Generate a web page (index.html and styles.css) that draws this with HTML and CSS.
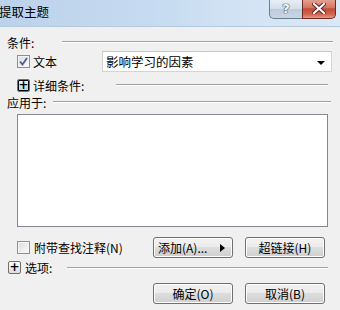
FILE: index.html
```html
<!DOCTYPE html>
<html lang="zh">
<head>
<meta charset="utf-8">
<link rel="stylesheet" href="styles.css">
</head>
<body>
<div class="dialog">
  <div class="titlebar">
    <span class="title">提取主题</span>
    <div class="caption-btns">
      <div class="cbtn help">?</div>
      <div class="cbtn close">
        <svg width="14" height="11" viewBox="0 0 14 11"><path d="M2 1 L12 10 M12 1 L2 10" stroke="#5a1e1e" stroke-width="4" stroke-linecap="square"/><path d="M2 1 L12 10 M12 1 L2 10" stroke="#fff" stroke-width="2.2" stroke-linecap="square"/></svg>
      </div>
    </div>
  </div>
  <div class="content">
    <div class="heading h1"><span>条件:</span><i class="rule r1"></i></div>
    <div class="row r-text">
      <span class="chk checked"><svg width="9" height="9" viewBox="0 0 9 9"><path d="M1 4.5 L3.5 7.5 L8 1" fill="none" stroke="#4a5f97" stroke-width="1.8"/></svg></span>
      <span class="lbl">文本</span>
      <div class="combo"><span>影响学习的因素</span><i class="arrow"></i></div>
    </div>
    <div class="heading h2"><span class="exp hot">+</span><span class="lbl">详细条件:</span><i class="rule r2"></i></div>
    <div class="heading h3"><span>应用于:</span><i class="rule r3"></i></div>
    <div class="listbox"></div>
    <div class="row r-actions">
      <span class="chk"></span>
      <span class="lbl">附带查找注释(N)</span>
      <div class="btns">
        <button class="btn add">添加(A)... <i class="tri"></i></button>
        <button class="btn">超链接(H)</button>
      </div>
    </div>
    <div class="heading h4"><span class="exp">+</span><span class="lbl opt">选项:</span><i class="rule r4"></i></div>
    <div class="row r-ok">
      <div class="btns">
        <button class="btn">确定(O)</button>
        <button class="btn">取消(B)</button>
      </div>
    </div>
  </div>
</div>
</body>
</html>
```

FILE: styles.css
```css
html, body {
  margin: 0;
  padding: 0;
}
body {
  width: 340px;
  height: 310px;
  overflow: hidden;
  background: #f0f0f0;
  font-family: "Noto Sans CJK SC", "Liberation Sans", sans-serif;
  font-size: 12px;
  color: #000;
}
.dialog {
  width: 340px;
  height: 310px;
}
.titlebar {
  height: 26px;
  border-bottom: 1px solid #b4c8dc;
  background: linear-gradient(to right, #bcd2ea 0%, #c6dbf1 45%, #d4e4f4 75%, #dbe8f5 100%);
  display: flex;
  align-items: flex-start;
  justify-content: space-between;
}
.title {
  line-height: 24px;
  font-size: 12.5px;
  margin-left: -1px;
  color: #000;
}
.caption-btns {
  display: flex;
  margin-right: 4px;
  margin-top: -1px;
}
.cbtn {
  height: 19px;
  border: 1px solid #6b7d93;
  border-top: none;
  display: flex;
  align-items: center;
  justify-content: center;
}
.help {
  width: 32px;
  border-radius: 0 0 0 5px;
  border-right: none;
  background: linear-gradient(#e9eff6 0%, #d4dfeb 50%, #bccbdb 52%, #c9d6e4 100%);
  color: #fff;
  font-family: "DejaVu Sans", sans-serif;
  font-weight: bold;
  font-size: 13px;
  text-shadow: 0 0 1px #2b3b52, 0 0 1px #2b3b52, 0 0 1px #2b3b52;
}
.close {
  width: 32px;
  border-radius: 0 0 5px 0;
  border-color: #6e2a25;
  background: linear-gradient(#e8a595 0%, #d47667 45%, #c24a38 52%, #d26350 80%, #e39a84 100%);
}
.content {
  padding: 7px 0 0 7px;
}
.heading {
  display: flex;
  align-items: center;
  height: 16px;
}
.rule {
  display: block;
  flex: 1;
  height: 0;
  border-top: 1px solid #a0a0a0;
  border-bottom: 1px solid #fff;
}
.r1 { margin-left: 28px; margin-right: 7px; }
.r2 { margin-left: 32px; margin-right: 12px; }
.r3 { margin-left: 7px; margin-right: 9px; }
.r4 { margin-left: 15px; margin-right: 12px; }
.row {
  display: flex;
  align-items: center;
}
.r-text {
  height: 21px;
  margin-top: 1px;
  padding-left: 10px;
}
.chk {
  width: 11px;
  height: 11px;
  border: 1px solid #8e8f8f;
  background: linear-gradient(135deg, #dcdcdc, #fbfbfb);
  display: flex;
  align-items: center;
  justify-content: center;
  box-shadow: inset 0 0 0 1px #f4f4f4;
}
.lbl {
  margin-left: 3px;
}
.combo {
  margin-left: 45px;
  width: 225px;
  height: 19px;
  border: 1px solid #d4d4d4;
  border-top-color: #c6c6c6;
  background: #fff;
  display: flex;
  align-items: center;
  justify-content: space-between;
  padding-left: 3px;
  box-sizing: content-box;
}
.combo span {
  font-size: 12.5px;
}
.arrow {
  width: 0;
  height: 0;
  border-left: 4px solid transparent;
  border-right: 4px solid transparent;
  border-top: 4px solid #000;
  margin-right: 6px;
  margin-top: 2px;
}
.h2 {
  margin-top: 6px;
  height: 14px;
  padding-left: 10px;
}
.exp {
  width: 11px;
  height: 11px;
  border: 1px solid #6f6f6f;
  border-radius: 2px;
  background: linear-gradient(#fdfdfd, #dcdcdc);
  font-family: "DejaVu Sans", sans-serif;
  font-size: 12px;
  line-height: 11px;
  text-align: center;
  font-weight: bold;
}
.exp.hot {
  border-color: #3c7fb1;
  background: linear-gradient(#e8f6fd, #a9dbf6);
  box-shadow: inset 0 0 0 1px #000;
}
.h3 {
  margin-top: 2px;
}
.listbox {
  margin: 4px 0 0 10px;
  width: 309px;
  height: 111px;
  border: 1px solid #828790;
  background: #fff;
}
.r-actions {
  margin-top: 10px;
  height: 21px;
  padding-left: 10px;
}
.r-actions .lbl {
  margin-left: 4px;
}
.btns {
  display: flex;
  gap: 12px;
  margin-left: auto;
  margin-right: 15px;
}
.btn {
  width: 80px;
  height: 21px;
  padding: 0;
  border: 1px solid #707070;
  border-radius: 3px;
  background: linear-gradient(#f2f2f2 0%, #ebebeb 49%, #dddddd 50%, #cfcfcf 100%);
  font-family: "Noto Sans CJK SC", "Liberation Sans", sans-serif;
  font-size: 12px;
  color: #000;
  display: flex;
  align-items: center;
  justify-content: center;
  box-shadow: inset 0 0 0 1px #fcfcfc;
}
.btn.add {
  justify-content: flex-start;
  padding-left: 4px;
}
.tri {
  width: 0;
  height: 0;
  border-top: 4px solid transparent;
  border-bottom: 4px solid transparent;
  border-left: 5px solid #000;
  margin-left: 13px;
}
.h4 {
  margin-top: 3px;
  height: 13px;
  padding-left: 1px;
}
.opt {
  margin-left: 4px;
}
.r-ok {
  margin-top: 9px;
  height: 21px;
}
```
